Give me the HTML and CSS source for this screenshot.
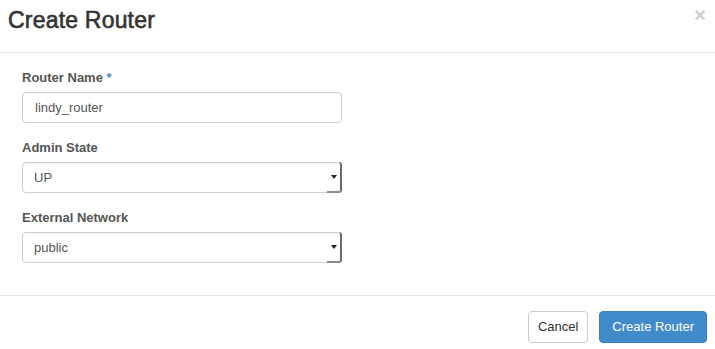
FILE: index.html
```html
<!DOCTYPE html>
<html>
<head>
<meta charset="utf-8">
<link rel="stylesheet" href="styles.css">
</head>
<body>
<div class="modal">
  <div class="modal-header">
    <h3 class="modal-title">Create Router</h3>
    <span class="close">&times;</span>
  </div>
  <div class="modal-body">
    <div class="form-group">
      <label class="control-label">Router Name <span class="req">*</span></label>
      <div class="form-control">lindy_router</div>
    </div>
    <div class="form-group">
      <label class="control-label">Admin State</label>
      <div class="form-control select"><span class="value">UP</span><span class="caret-box"><span class="caret"></span></span></div>
    </div>
    <div class="form-group">
      <label class="control-label">External Network</label>
      <div class="form-control select"><span class="value">public</span><span class="caret-box"><span class="caret"></span></span></div>
    </div>
  </div>
  <div class="modal-footer">
    <button class="btn btn-default">Cancel</button>
    <button class="btn btn-primary">Create Router</button>
  </div>
</div>
</body>
</html>
```

FILE: styles.css
```css
html, body {
  margin: 0;
  padding: 0;
  background: #fff;
}
body {
  font-family: "Liberation Sans", Arial, Helvetica, sans-serif;
  color: #333;
  width: 715px;
  height: 349px;
  overflow: hidden;
}
.modal-header {
  box-sizing: border-box;
  border-bottom: 1px solid #e5e5e5;
  display: flex;
  justify-content: space-between;
  align-items: flex-start;
  padding: 0 9px 0 8px;
  height: 53px;
}
.modal-title {
  margin: 0;
  padding-top: 6px;
  font-size: 23px;
  line-height: 28px;
  font-weight: normal;
  color: #333;
  letter-spacing: 0.2px;
  -webkit-text-stroke: 0.6px #333;
}
.close {
  font-size: 20px;
  font-weight: bold;
  line-height: 20px;
  color: #cfcfcf;
  padding-top: 5px;
}
.modal-body {
  padding: 16px 22px 0 22px;
  border-bottom: 1px solid #e5e5e5;
  height: 243px;
  box-sizing: border-box;
}
.form-group {
  width: 320px;
  margin-bottom: 16px;
}
.form-group + .form-group + .form-group {
  margin-top: 1px;
}
.control-label {
  display: block;
  font-size: 13px;
  font-weight: bold;
  line-height: 18px;
  color: #555;
  margin-bottom: 5px;
}
.req {
  color: #4c86b8;
}
.form-control {
  box-sizing: border-box;
  height: 31px;
  border: 1px solid #cfcfcf;
  border-radius: 4px;
  font-size: 13px;
  line-height: 29px;
  padding-left: 12px;
  color: #555;
  box-shadow: inset 0 1px 1px rgba(0,0,0,0.04);
}
.select {
  display: flex;
  padding-left: 11px;
  padding-right: 0;
}
.value {
  flex: 1;
}
.caret-box {
  width: 13px;
  margin-top: -1px;
  margin-bottom: -1px;
  margin-right: -1px;
  border-right: 2px solid #6a6a6a;
  border-bottom: 2px solid #8a8a8a;
  border-radius: 0 3px 3px 0;
  display: flex;
  align-items: center;
  justify-content: center;
}
.caret {
  width: 0;
  height: 0;
  border-left: 3px solid transparent;
  border-right: 3px solid transparent;
  border-top: 4px solid #222;
  margin-top: 1px;
}
.modal-footer {
  display: flex;
  justify-content: flex-end;
  gap: 11px;
  padding: 15px 8px 0 0;
}
.btn {
  font-family: "Liberation Sans", Arial, Helvetica, sans-serif;
  font-size: 13px;
  line-height: 18px;
  height: 32px;
  box-sizing: border-box;
  padding: 6px 11px;
  border-radius: 4px;
  border: 1px solid #ccc;
  cursor: pointer;
}
.btn-default {
  background: #fff;
  color: #333;
  padding: 6px 9px;
}
.btn-primary {
  background: #428bca;
  border-color: #3a7fbb;
  color: #fff;
  padding: 6px 12px;
}
```
